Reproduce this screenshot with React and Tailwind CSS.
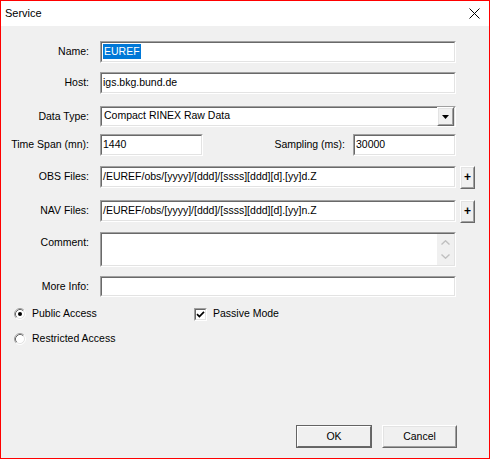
import React from 'react'

// classic sunken edit frame
function Sunken({ className = '', inner = '', children }) {
  return (
    <div className={`border border-t-[#a0a0a0] border-l-[#a0a0a0] border-b-white border-r-white ${className}`}>
      <div className={`h-full border border-t-[#696969] border-l-[#696969] border-b-[#e3e3e3] border-r-[#e3e3e3] bg-white ${inner}`}>
        {children}
      </div>
    </div>
  )
}

function Raised({ className = '', children }) {
  return (
    <div className={`border border-t-white border-l-white border-b-[#696969] border-r-[#696969] ${className}`}>
      <div className="h-full border border-t-[#e3e3e3] border-l-[#e3e3e3] border-b-[#a0a0a0] border-r-[#a0a0a0] bg-[#f0f0f0] flex items-center justify-center">
        {children}
      </div>
    </div>
  )
}

function Edit({ value, className = 'w-[356px]' }) {
  return (
    <Sunken className={`h-[22px] ${className}`} inner="flex items-center pl-[1px] pb-[1px]">
      <span className="whitespace-nowrap">{value}</span>
    </Sunken>
  )
}

function Label({ children, top }) {
  return (
    <div className={`w-[88px] shrink-0 text-right whitespace-nowrap ${top ? 'self-start pt-[3px]' : ''}`}>{children}</div>
  )
}

function Radio({ checked }) {
  return (
    <svg width="12" height="12" viewBox="0 0 12 12" className="shrink-0">
      <circle cx="6" cy="6" r="4.5" fill="white" />
      <path d="M2.11 9.89 A5.5 5.5 0 0 1 9.89 2.11" fill="none" stroke="#a0a0a0" />
      <path d="M9.89 2.11 A5.5 5.5 0 0 1 2.11 9.89" fill="none" stroke="#ffffff" />
      <path d="M2.82 9.18 A4.5 4.5 0 0 1 9.18 2.82" fill="none" stroke="#696969" />
      <path d="M9.18 2.82 A4.5 4.5 0 0 1 2.82 9.18" fill="none" stroke="#e3e3e3" />
      {checked && <circle cx="6" cy="6" r="2" fill="black" />}
    </svg>
  )
}

export default function App() {
  return (
    <div className="w-[490px] h-[459px] border border-[#ff0000] bg-[#f0f0f0] flex flex-col font-['Liberation_Sans',Arial,sans-serif] text-[10.5px] text-black">

      {/* Title bar */}
      <div className="h-[25px] shrink-0 bg-white flex items-center justify-between pl-[4px] pr-[9px]">
        <span className="text-[11px] pb-[1px]">Service</span>
        <svg width="11" height="11" viewBox="0 0 11 11">
          <path d="M0.5 0.5 L10.5 10.5 M10.5 0.5 L0.5 10.5" stroke="black" strokeWidth="1" />
        </svg>
      </div>

      {/* Form */}
      <div className="flex-1 flex flex-col">
        <div className="flex items-center gap-[11px] mt-[15px]">
          <Label>Name:</Label>
          <Sunken className="h-[22px] w-[356px]" inner="flex items-center pl-[1px] pb-[1px]">
            <span className="bg-[#0078d7] text-white px-[1px] leading-[15px]">EUREF</span>
          </Sunken>
        </div>

        <div className="flex items-center gap-[11px] mt-[9px]">
          <Label>Host:</Label>
          <Edit value="igs.bkg.bund.de" />
        </div>

        <div className="flex items-center gap-[11px] mt-[12px]">
          <Label>Data Type:</Label>
          <Sunken className="h-[21px] w-[356px]" inner="flex items-center pl-[2px]">
            <span className="flex-1 whitespace-nowrap pb-[1px]">Compact RINEX Raw Data</span>
            <Raised className="w-[17px] h-[19px]">
              <svg width="7" height="4" viewBox="0 0 7 4">
                <path d="M0 0 H7 L3.5 4 Z" fill="black" />
              </svg>
            </Raised>
          </Sunken>
        </div>

        <div className="flex items-center mt-[7px]">
          <div className="w-[88px] shrink-0 text-right whitespace-nowrap">Time Span (mn):</div>
          <div className="ml-[11px]">
            <Edit value="1440" className="w-[103px]" />
          </div>
          <div className="w-[142px] text-right whitespace-nowrap">Sampling (ms):</div>
          <div className="ml-[8px]">
            <Edit value="30000" className="w-[103px]" />
          </div>
        </div>

        <div className="flex items-start gap-[11px] mt-[10px]">
          <div className="w-[88px] shrink-0 text-right h-[22px] flex items-center justify-end">OBS Files:</div>
          <Edit value="/EUREF/obs/[yyyy]/[ddd]/[ssss][ddd][d].[yy]d.Z" />
          <Raised className="w-[15px] h-[23px] -ml-[7px]">
            <span className="text-[12px] font-bold leading-none pb-[1px]">+</span>
          </Raised>
        </div>

        <div className="flex items-start gap-[11px] mt-[11px]">
          <div className="w-[88px] shrink-0 text-right h-[22px] flex items-center justify-end">NAV Files:</div>
          <Edit value="/EUREF/obs/[yyyy]/[ddd]/[ssss][ddd][d].[yy]n.Z" />
          <Raised className="w-[15px] h-[23px] -ml-[7px]">
            <span className="text-[12px] font-bold leading-none pb-[1px]">+</span>
          </Raised>
        </div>

        <div className="flex gap-[11px] mt-[9px]">
          <Label top>Comment:</Label>
          <Sunken className="h-[35px] w-[356px]" inner="flex justify-end">
            <div className="w-[17px] h-full bg-[#f0f0f0] flex flex-col items-center justify-between pt-[6px] pb-[6px]">
              <svg width="9" height="5" viewBox="0 0 9 5">
                <path d="M0.5 4.5 L4.5 0.8 L8.5 4.5" fill="none" stroke="#bfbfbf" strokeWidth="1.4" />
              </svg>
              <svg width="9" height="5" viewBox="0 0 9 5">
                <path d="M0.5 0.5 L4.5 4.2 L8.5 0.5" fill="none" stroke="#bfbfbf" strokeWidth="1.4" />
              </svg>
            </div>
          </Sunken>
        </div>

        <div className="flex items-center gap-[11px] mt-[9px]">
          <Label>More Info:</Label>
          <Sunken className="h-[21px] w-[356px]" />
        </div>

        <div className="flex items-center h-[14px] mt-[10px] pl-[13px]">
          <Radio checked />
          <span className="ml-[6px] w-[162px]">Public Access</span>
          <div className="w-[13px] h-[13px] shrink-0 border border-t-[#a0a0a0] border-l-[#a0a0a0] border-b-white border-r-white">
            <div className="w-full h-full border border-t-[#696969] border-l-[#696969] border-b-[#e3e3e3] border-r-[#e3e3e3] bg-white flex items-center justify-center">
              <svg width="9" height="9" viewBox="0 0 9 9">
                <path d="M1 4.2 L3.4 6.6 L8 1.8" fill="none" stroke="black" strokeWidth="1.7" />
              </svg>
            </div>
          </div>
          <span className="ml-[6px]">Passive Mode</span>
        </div>

        <div className="flex items-center h-[14px] mt-[11px] pl-[13px]">
          <Radio />
          <span className="ml-[6px]">Restricted Access</span>
        </div>

        {/* Buttons */}
        <div className="mt-auto mb-[10px] flex justify-end gap-[10px] pr-[32px]">
          <div className="border border-[#646464] w-[76px] h-[23px]">
            <div className="h-full border border-t-white border-l-white border-b-[#696969] border-r-[#696969] bg-[#f0f0f0] flex items-center justify-center">
              OK
            </div>
          </div>
          <Raised className="w-[75px] h-[23px]">Cancel</Raised>
        </div>
      </div>
    </div>
  )
}
